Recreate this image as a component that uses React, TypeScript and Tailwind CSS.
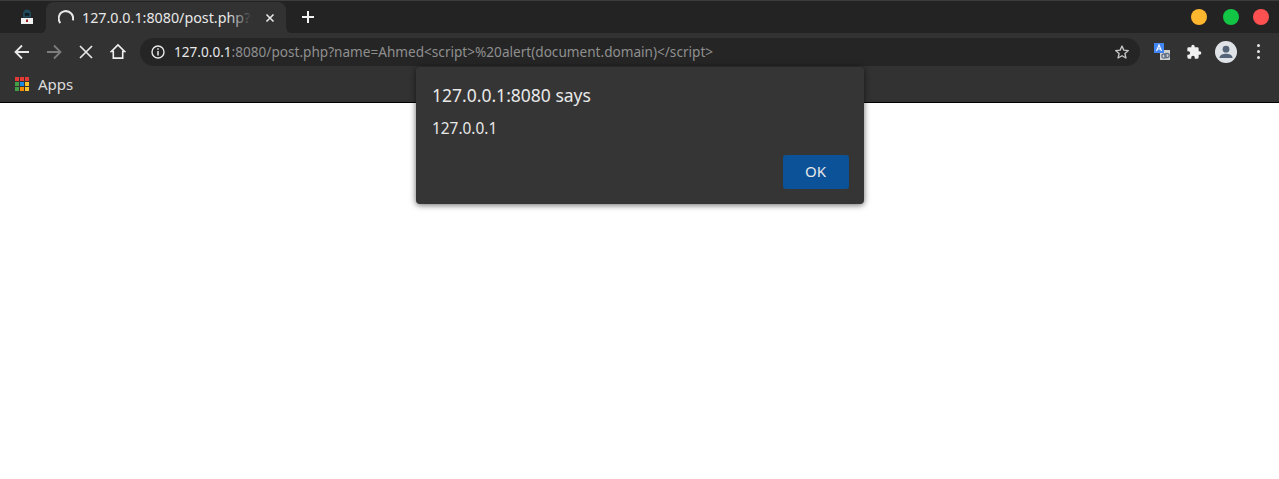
import React from "react";

const font = { fontFamily: '"Noto Sans", sans-serif' };

function Tab() {
  return (
    <div className="relative mt-px flex h-[32px] w-[240px] items-center rounded-t-[8px] bg-[#323232] pl-[12px]">
      <svg className="absolute left-[-8px] bottom-0" width="8" height="8" viewBox="0 0 8 8"><path d="M0 8C5 8 8 5 8 0V8Z" fill="#323232" /></svg>
      <svg className="absolute right-[-8px] bottom-0" width="8" height="8" viewBox="0 0 8 8"><path d="M8 8C3 8 0 5 0 0V8Z" fill="#323232" /></svg>
      <svg width="16" height="16" viewBox="0 0 16 16" fill="none" className="shrink-0"><path d="M2.4 13A7.2 7.2 0 1 1 14.8 10.4" stroke="#e8e8e8" strokeWidth="2" /></svg>
      <div className="relative ml-[8px] w-[176px] overflow-hidden whitespace-nowrap text-[14.3px] leading-[20px] text-[#e8e8e8]">
        127.0.0.1:8080/post.php?name=Ahmed
        <div className="absolute inset-y-0 right-0 w-[30px] bg-gradient-to-r from-transparent to-[#323232] to-80%" />
      </div>
      <svg width="10" height="10" viewBox="0 0 10 10" className="ml-[7px] shrink-0"><path d="M1.5 1.5L8.5 8.5M8.5 1.5L1.5 8.5" stroke="#e8e8e8" strokeWidth="1.6" /></svg>
    </div>
  );
}

function Dot({ c }: { c: string }) {
  return <div className={`h-[16px] w-[16px] rounded-full ${c}`} />;
}

export default function App() {
  return (
    <div className="relative h-[479px] w-[1279px] overflow-hidden bg-white" style={font}>
      <div className="bg-[#323232]">
        {/* tab strip */}
        <div className="flex h-[33px] items-start border-t border-[#3c3c3c] bg-[#232323]">
          <div className="flex h-[32px] w-[46px] items-center justify-center pl-[8px]">
            <svg width="14" height="16" viewBox="0 0 14 16">
              <path d="M7 0.5C4.5 0.5 3 2.2 3 4.5V8.5H11V4.5C11 2.2 9.5 0.5 7 0.5Z" fill="#1f4a5c" />
              <rect x="4.8" y="4" width="4.4" height="2.8" fill="#0d1a20" />
              <rect x="1" y="9" width="12" height="6" fill="#f1f1f1" />
              <rect x="6" y="10.5" width="2" height="2.5" fill="#a02020" />
            </svg>
          </div>
          <Tab />
          <div className="ml-[14px] flex h-[32px] w-[16px] items-center justify-center">
            <svg width="12" height="12" viewBox="0 0 12 12"><path d="M6 0V12M0 6H12" stroke="#f2f2f2" strokeWidth="2" /></svg>
          </div>
          <div className="ml-auto mr-[10px] flex h-[32px] items-center">
            <Dot c="bg-[#fdb72f]" />
            <div className="w-[16px]" />
            <Dot c="bg-[#12c545]" />
            <div className="w-[14px]" />
            <Dot c="bg-[#fc5150]" />
          </div>
        </div>
        {/* toolbar */}
        <div className="flex h-[37px] items-center">
          <div className="ml-[14px] flex w-[16px] justify-center">
            <svg width="16" height="16" viewBox="0 0 16 16" fill="none"><path d="M15 8H2M8 1.5L1.5 8L8 14.5" stroke="#e8e8e8" strokeWidth="1.8" /></svg>
          </div>
          <div className="ml-[16px] flex w-[16px] justify-center">
            <svg width="16" height="16" viewBox="0 0 16 16" fill="none"><path d="M1 8H14M8 1.5L14.5 8L8 14.5" stroke="#7d7d7d" strokeWidth="1.8" /></svg>
          </div>
          <div className="ml-[16px] flex w-[16px] justify-center">
            <svg width="14" height="14" viewBox="0 0 14 14" fill="none"><path d="M1 1L13 13M13 1L1 13" stroke="#e8e8e8" strokeWidth="1.7" /></svg>
          </div>
          <div className="ml-[16px] flex w-[16px] justify-center">
            <svg width="17" height="17" viewBox="0 0 17 17" fill="none"><path d="M8.5 1.5L1.5 8.5H3.5V15.5H13.5V8.5H15.5Z" stroke="#f0f0f0" strokeWidth="1.7" strokeLinejoin="miter" /></svg>
          </div>
          <div className="ml-[14px] flex h-[28px] w-[1000px] items-center rounded-full bg-[#252525] pl-[11px] pr-[10px]">
            <svg width="14" height="14" viewBox="0 0 14 14" fill="none" className="shrink-0">
              <circle cx="7" cy="7" r="6" stroke="#e8e8e8" strokeWidth="1.4" />
              <path d="M7 6V10.5" stroke="#e8e8e8" strokeWidth="1.5" />
              <path d="M7 3.2V4.8" stroke="#e8e8e8" strokeWidth="1.5" />
            </svg>
            <div className="ml-[9px] whitespace-nowrap text-[13.6px] leading-[20px] text-[#8f8f8f]">
              <span className="text-[#e8e8e8]">127.0.0.1</span>:8080/post.php?name=Ahmed&lt;script&gt;%20alert(document.domain)&lt;/script&gt;
            </div>
            <svg width="16" height="16" viewBox="0 0 24 24" fill="none" className="ml-auto shrink-0">
              <path d="M12 3L14.7 9.2L21.5 9.9L16.4 14.4L17.9 21L12 17.6L6.1 21L7.6 14.4L2.5 9.9L9.3 9.2Z" stroke="#c8c8c8" strokeWidth="2" strokeLinejoin="round" />
            </svg>
          </div>
          <div className="relative ml-[14px] h-[18px] w-[18px]">
            <svg width="18" height="18" viewBox="0 0 18 18">
              <rect x="6" y="7" width="10" height="10" fill="#d0d0d0" />
              <circle cx="10" cy="13" r="2.2" fill="none" stroke="#5a6b80" strokeWidth="1.2" />
              <circle cx="13" cy="12.5" r="2.2" fill="none" stroke="#5a6b80" strokeWidth="1.2" />
              <rect x="0" y="0" width="10" height="10" fill="#4285f4" />
              <path d="M2.5 8L5 2L7.5 8M3.5 6H6.5" stroke="#fff" strokeWidth="1.1" fill="none" />
            </svg>
          </div>
          <div className="ml-[14px]">
            <svg width="16" height="16" viewBox="0 0 24 24"><path d="M20.5 11H19V7a2 2 0 0 0-2-2h-4V3.5a2.5 2.5 0 0 0-5 0V5H4a2 2 0 0 0-2 2v3.8h1.5a2.7 2.7 0 0 1 0 5.4H2V20a2 2 0 0 0 2 2h3.8v-1.5a2.7 2.7 0 0 1 5.4 0V22H17a2 2 0 0 0 2-2v-4h1.5a2.5 2.5 0 0 0 0-5Z" fill="#efefef" /></svg>
          </div>
          <div className="ml-[13px]">
            <svg width="22" height="22" viewBox="0 0 22 22">
              <circle cx="11" cy="11" r="11" fill="#dfe3e8" />
              <circle cx="11" cy="8.2" r="3.4" fill="#56647a" />
              <path d="M4.5 16.5C5 13.8 8 12.8 11 12.8C14 12.8 17 13.8 17.5 16.5V17H4.5Z" fill="#56647a" />
            </svg>
          </div>
          <div className="ml-[20px] flex flex-col gap-[3px]">
            <div className="h-[3px] w-[3px] rounded-full bg-[#e8e8e8]" />
            <div className="h-[3px] w-[3px] rounded-full bg-[#e8e8e8]" />
            <div className="h-[3px] w-[3px] rounded-full bg-[#e8e8e8]" />
          </div>
        </div>
        {/* bookmarks */}
        <div className="flex h-[33px] items-center border-b border-black pb-[5px] pl-[15px]">
          <div className="grid h-[14px] w-[14px] grid-cols-3 gap-[1px]">
            {["bg-[#e53935]", "bg-[#e53935]", "bg-[#e53935]", "bg-[#43a047]", "bg-[#1e88e5]", "bg-[#fbc02d]", "bg-[#43a047]", "bg-[#fb8c00]", "bg-[#fbc02d]"].map((c, i) => (
              <div key={i} className={c} />
            ))}
          </div>
          <span className="ml-[9px] text-[15px] leading-[20px] text-[#dcdcdc]">Apps</span>
        </div>
      </div>

      {/* alert dialog */}
      <div className="absolute left-[416px] top-[67px] h-[137px] w-[448px] rounded-[4px] bg-[#353535] pl-[16px] pr-[15px] shadow-[0_1px_6px_rgba(0,0,0,0.6)]">
        <div className="pt-[16px] text-[17.5px] leading-[24px] text-[#e8e8e8]">127.0.0.1:8080 says</div>
        <div className="pt-[12px] text-[15.4px] leading-[20px] text-[#e8e8e8]">127.0.0.1</div>
        <div className="mt-[16px] flex justify-end">
          <div className="flex h-[34px] w-[66px] items-center justify-center rounded-[3px] bg-[#0b5299] pb-[1px] pr-[1px] text-[15px] text-[#e8e8e8]">OK</div>
        </div>
      </div>
    </div>
  );
}
